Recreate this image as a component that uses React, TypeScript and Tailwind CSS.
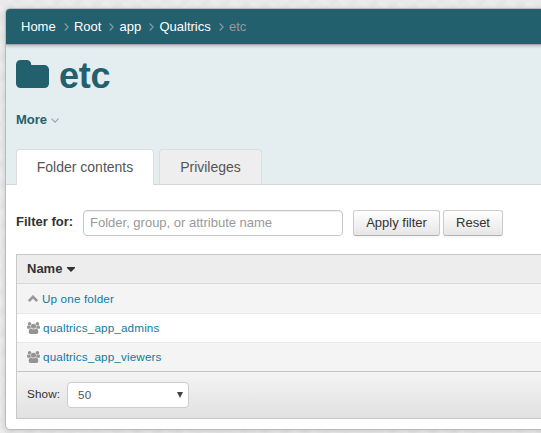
import React from "react";

const crumbs = ["Home", "Root", "app", "Qualtrics"];

function Users() {
  return (
    <svg viewBox="0 0 1920 1792" preserveAspectRatio="none" className="h-[12px] w-[13px] shrink-0 fill-[#949494]">
      <path d="M593 896q-162 5-265 128h-134q-82 0-138-40.5t-56-118.5q0-353 124-353 6 0 43.5 21t97.5 42.5 119 21.5q67 0 133-23-5 37-5 66 0 139 81 256zm1071 637q0 120-73 189.5t-194 69.5h-874q-121 0-194-69.5t-73-189.5q0-53 3.5-103.5t14-109 26.5-108.5 43-97.5 62-81 85.5-53.5 111.5-20q10 0 43 21.5t73 48 107 48 135 21.5 135-21.5 107-48 73-48 43-21.5q61 0 111.5 20t85.5 53.5 62 81 43 97.5 26.5 108.5 14 109 3.5 103.5zm-1024-1277q0 106-75 181t-181 75-181-75-75-181 75-181 181-75 181 75 75 181zm704 384q0 159-112.5 271.5t-271.5 112.5-271.5-112.5-112.5-271.5 112.5-271.5 271.5-112.5 271.5 112.5 112.5 271.5zm576 225q0 78-56 118.5t-138 40.5h-134q-103-123-265-128 81-117 81-256 0-29-5-66 66 23 133 23 59 0 119-21.5t97.5-42.5 43.5-21q124 0 124 353zm-128-609q0 106-75 181t-181 75-181-75-75-181 75-181 181-75 181 75 75 181z" />
    </svg>
  );
}

export default function App() {
  return (
    <div className="h-[433px] w-[541px] overflow-hidden bg-[#e9e9e9] bg-[repeating-linear-gradient(45deg,#ffffff20_0_3px,transparent_5px_11px,#ffffff20_13px),repeating-linear-gradient(-45deg,#00000004_0_3px,transparent_6px_13px,#00000004_15px)] pl-[5px] pt-[8px] font-['Liberation_Sans',Arial,sans-serif] text-[13px] text-[#333]">
      <div className="h-[422px] w-[560px] overflow-hidden rounded-[5px] border border-[#bbb] bg-white shadow-[0_1px_5px_#00000026]">
        <nav className="relative flex h-[36px] items-center border-b border-[#a5a8a8] bg-[#23606e] pl-[15px] text-white shadow-[0_1px_3px_#00000040]">
          {crumbs.map((c) => (
            <React.Fragment key={c}>
              <span>{c}</span>
              <svg viewBox="0 0 5 8" className="ml-[7.9px] mr-[5.3px] h-[8px] w-[5px] fill-none stroke-[#829ca3]">
                <path d="M.7.5 4.2 4 .7 7.5" strokeWidth="1.2" />
              </svg>
            </React.Fragment>
          ))}
          <span className="text-[#999]">etc</span>
        </nav>
        <header className="flex h-[140px] flex-col border-b border-[#d5d6d9] bg-[#e4edef] pl-[10px]">
          <h1 className="mt-[11px] flex h-[40px] items-center text-[36px] font-bold leading-[40px] tracking-[-0.2px] text-[#23606e]">
            <svg viewBox="0 128 1664 1408" preserveAspectRatio="none" className="mr-[10px] mt-[-4px] h-[28px] w-[33px] fill-[#23606e]">
              <path d="M1664 608v704q0 92-66 158t-158 66h-1216q-92 0-158-66t-66-158v-960q0-92 66-158t158-66h320q92 0 158 66t66 158v32h672q92 0 158 66t66 158z" />
            </svg>
            etc
          </h1>
          <div className="mt-[14px] flex h-[20px] items-center font-bold text-[#23606e]">
            More
            <svg viewBox="0 0 8 5" className="ml-[4px] h-[5px] w-[8px] fill-none stroke-[#9aa7aa]">
              <path d="M.5.7 4 4.2 7.5.7" strokeWidth="1.2" />
            </svg>
          </div>
          <div className="mt-auto mb-[-1px] flex gap-[5px] text-[14px] text-[#555]">
            <div className="flex h-[36px] w-[138px] items-center justify-center rounded-t-[4px] border border-b-0 border-[#ddd] bg-white">Folder contents</div>
            <div className="flex h-[36px] w-[103px] items-center justify-center rounded-t-[4px] border border-[#ddd] border-b-[#d5d6d9] bg-[#eee]">Privileges</div>
          </div>
        </header>
        <main className="pl-[10px] pt-[25px]">
          <div className="flex h-[26px]">
            <label className="w-[67px] pt-[2px] font-bold leading-[20px]">Filter for:</label>
            <div className="flex w-[260px] items-center rounded-[4px] border border-[#c8c8c8] bg-white pl-[6px] text-[#999] shadow-[inset_0_1px_1px_#00000013]">Folder, group, or attribute name</div>
            <button className="ml-[10px] w-[87px] rounded-[3px] border border-[#ccc] border-b-[#b3b3b3] bg-gradient-to-b from-white to-[#e6e6e6] shadow-[0_1px_2px_#0000000d]">Apply filter</button>
            <button className="ml-[3px] w-[60px] rounded-[3px] border border-[#ccc] border-b-[#b3b3b3] bg-gradient-to-b from-white to-[#e6e6e6] shadow-[0_1px_2px_#0000000d]">Reset</button>
          </div>
          <section className="mt-[18px] h-[165px] border border-[#c8c8c8] text-[11.7px] tracking-[0.14px]">
            <div className="flex h-[29px] items-center border-b border-[#d9d9d9] bg-[#ededed] pl-[10px] text-[13px] font-bold tracking-normal">
              Name
              <svg viewBox="0 0 8 5" className="ml-[5px] h-[5px] w-[8px] fill-[#333]"><path d="M0 0h8v1L4 5 0 1z" /></svg>
            </div>
            <div className="flex h-[30px] items-center border-b border-[#e8e8e8] bg-[#f4f4f4] pl-[11px] text-[#0d7ba6]">
              <svg viewBox="0 0 10 7" className="mr-[4px] h-[7px] w-[10px] fill-none stroke-[#999]"><path d="M.8 6 5 1.8 9.2 6" strokeWidth="2.6" /></svg>
              Up one folder
            </div>
            <div className="flex h-[29px] items-center gap-[3px] border-b border-[#e8e8e8] bg-white pl-[10px] text-[#0d7ba6]"><Users />qualtrics_app_admins</div>
            <div className="flex h-[29px] items-center gap-[3px] border-b border-[#c4c4c4] bg-[#f4f4f4] pl-[10px] text-[#0d7ba6]"><Users />qualtrics_app_viewers</div>
            <div className="flex h-[46px] items-center bg-gradient-to-b from-[#f4f4f4] to-[#e1e1e1] pl-[10px]">
              <span className="mt-[-2px] w-[40px]">Show:</span>
              <div className="flex h-[26px] w-[122px] items-center justify-between rounded-[4px] border border-[#ccc] bg-white pl-[10px] pr-[5px] text-[#555]">
                50
                <svg viewBox="0 0 6 6" className="mt-[-1px] h-[6px] w-[6px] fill-[#444]"><path d="M0 0h6L3 6z" /></svg>
              </div>
            </div>
          </section>
        </main>
      </div>
    </div>
  );
}
